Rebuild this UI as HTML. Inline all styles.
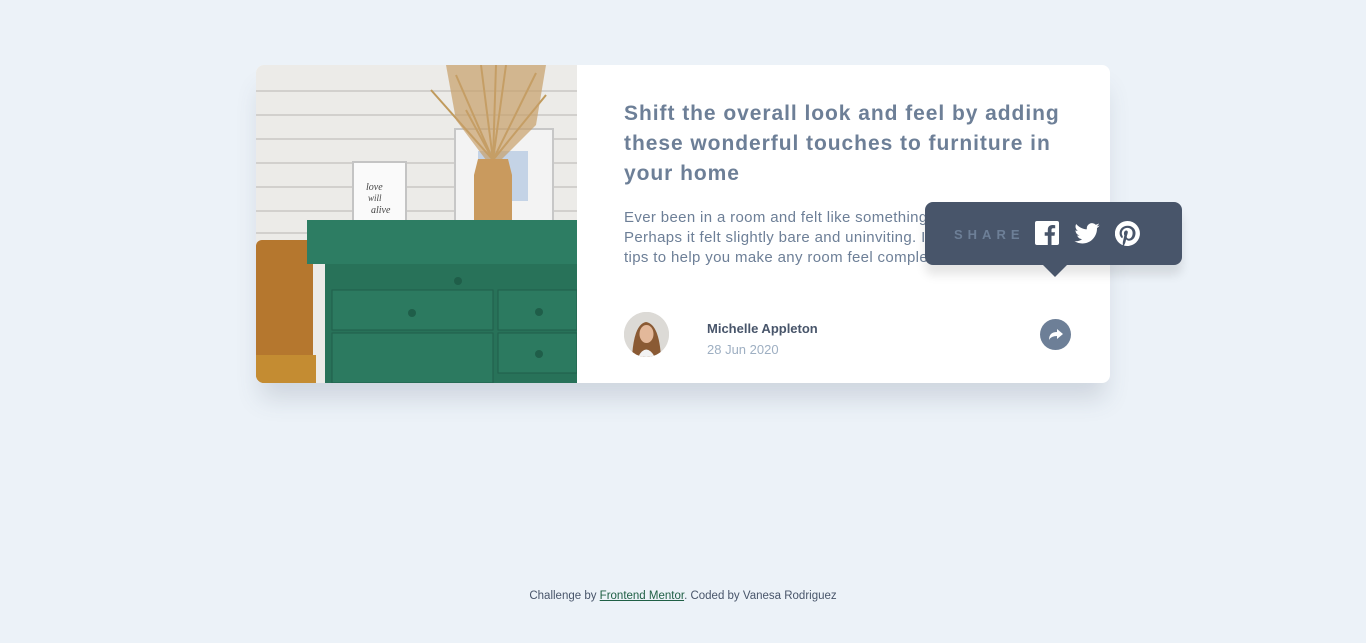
<!DOCTYPE html>
<html><head><meta charset="utf-8"><style>
*{margin:0;padding:0;box-sizing:border-box}
body{width:1366px;height:643px;background:#ecf2f8;font-family:"Liberation Sans",sans-serif;position:relative;overflow:hidden}
.card{position:absolute;left:256px;top:65px;width:854px;height:318px;background:#fff;border-radius:8px;overflow:visible;box-shadow:0 20px 25px -5px rgba(72,85,106,.18)}
.img{position:absolute;left:0;top:0;width:321px;height:318px;border-radius:8px 0 0 8px;overflow:hidden}
h1{position:absolute;left:368px;top:34px;font-size:21px;line-height:30px;color:#6d7f97;font-weight:bold;white-space:nowrap;letter-spacing:0.95px}
p.b{position:absolute;left:368px;top:143px;font-size:15px;line-height:20px;color:#6d7f97;white-space:nowrap;letter-spacing:0.35px}
.av{position:absolute;left:368px;top:247px;width:45px;height:45px;border-radius:50%;overflow:hidden;background:#d9d6d2}
.name{position:absolute;left:451px;top:256px;font-size:13px;font-weight:bold;color:#48556a}
.date{position:absolute;left:451px;top:277px;font-size:13px;color:#9eafc2}
.sh{position:absolute;left:784px;top:254px;width:31px;height:31px;border-radius:50%;background:#6d7f97}
.pop{position:absolute;left:925px;top:202px;width:257px;height:63px;background:#48556a;border-radius:8px;box-shadow:0 10px 10px rgba(0,0,0,.1)}
.pop:after{content:"";position:absolute;left:118px;top:63px;border:12px solid transparent;border-top:12px solid #48556a;border-bottom:0}
.pop span{position:absolute;left:29px;top:25px;font-size:13px;letter-spacing:5px;color:#6d7f97;font-weight:bold}
.foot{position:absolute;top:590px;left:0;width:1366px;text-align:center;font-size:11.5px;color:#48556a}
.foot a{color:#1f5f45;text-decoration:underline}
</style></head><body>
<div class="card">
<div class="img"><svg width="321" height="318" viewBox="0 0 321 318">
<rect width="321" height="318" fill="#ecebe8"/>
<g stroke="#c9c8c4" stroke-width="1.5">
<line x1="0" y1="26" x2="321" y2="26"/><line x1="0" y1="50" x2="321" y2="50"/><line x1="0" y1="74" x2="321" y2="74"/><line x1="0" y1="98" x2="321" y2="98"/><line x1="0" y1="122" x2="321" y2="122"/><line x1="0" y1="146" x2="321" y2="146"/><line x1="0" y1="168" x2="321" y2="168"/>
</g>
<rect x="0" y="175" width="57" height="143" fill="#b5772e" rx="6"/>
<rect x="0" y="290" width="60" height="28" fill="#c48c32"/>
<rect x="199" y="64" width="98" height="95" fill="#f3f3f3" stroke="#c7c7c7" stroke-width="2"/>
<rect x="222" y="86" width="50" height="50" fill="#c4d3e6"/>
<rect x="97" y="97" width="53" height="65" fill="#fafafa" stroke="#c4c4c4" stroke-width="2"/>
<text x="110" y="125" font-size="10" fill="#444" font-family="Liberation Serif" font-style="italic">love</text>
<text x="112" y="136" font-size="9" fill="#444" font-family="Liberation Serif" font-style="italic">will</text>
<text x="115" y="148" font-size="10" fill="#444" font-family="Liberation Serif" font-style="italic">alive</text>
<g stroke="#c09a5c" stroke-width="2">
<line x1="237" y1="95" x2="200" y2="10"/><line x1="237" y1="95" x2="225" y2="0"/><line x1="237" y1="95" x2="250" y2="0"/><line x1="237" y1="95" x2="280" y2="8"/><line x1="237" y1="95" x2="175" y2="25"/><line x1="237" y1="95" x2="290" y2="30"/><line x1="237" y1="95" x2="240" y2="0"/><line x1="237" y1="95" x2="210" y2="45"/>
</g>
<path d="M190 0 L290 0 L280 60 L245 95 L230 95 L200 55 Z" fill="#c8a06a" opacity=".7"/>
<path d="M222 94 L252 94 L256 110 L256 176 Q237 180 218 176 L218 110 Z" fill="#c99a5e"/>
<rect x="51" y="155" width="270" height="44" fill="#2d7d63"/>
<rect x="69" y="199" width="252" height="119" fill="#287259"/>
<rect x="76" y="225" width="161" height="40" fill="#2c7a60" stroke="#215f4a"/>
<rect x="242" y="225" width="79" height="40" fill="#2c7a60" stroke="#215f4a"/>
<rect x="76" y="268" width="161" height="50" fill="#2c7a60" stroke="#215f4a"/>
<rect x="242" y="268" width="79" height="40" fill="#2c7a60" stroke="#215f4a"/>
<circle cx="156" cy="248" r="4" fill="#1f5e49"/><circle cx="283" cy="247" r="4" fill="#1f5e49"/><circle cx="283" cy="289" r="4" fill="#1f5e49"/><circle cx="202" cy="216" r="4" fill="#1f5e49"/>
</svg></div>
<h1>Shift the overall look and feel by adding<br>these wonderful touches to furniture in<br>your home</h1>
<p class="b">Ever been in a room and felt like something was missing?<br>Perhaps it felt slightly bare and uninviting. I’ve got some simple<br>tips to help you make any room feel complete.</p>
<div class="av"><svg width="45" height="45"><rect width="45" height="45" fill="#dcdad6"/><path d="M8 45 Q10 12 22 10 Q35 12 37 45Z" fill="#8a5a34"/><ellipse cx="22.5" cy="22" rx="7" ry="9" fill="#e3b89a"/><path d="M14 45 Q22 30 31 45Z" fill="#f2f2f2"/></svg></div>
<div class="name">Michelle Appleton</div>
<div class="date">28 Jun 2020</div>
<div class="sh"><svg width="31" height="31" viewBox="0 0 31 31"><path d="M17 10 L23 15 L17 20 L17 17 Q11 17 9 21 Q9 13 17 13Z" fill="#fff"/></svg></div>
</div>
<div class="pop"><span>SHARE</span>
<svg style="position:absolute;left:110px;top:19px" width="24" height="24" viewBox="0 0 24 24"><rect width="24" height="24" rx="2" fill="#fff"/><path d="M16.5 24V14.8h3l.5-3.5h-3.5V9c0-1 .3-1.7 1.8-1.7h1.9V4.2c-.3 0-1.5-.2-2.8-.2-2.8 0-4.6 1.7-4.6 4.8v2.5H9.7v3.5h3.1V24z" fill="#48556a"/></svg>
<svg style="position:absolute;left:149px;top:21px" width="26" height="21" viewBox="0 0 24 20"><path d="M24 2.4c-.9.4-1.8.6-2.8.8 1-.6 1.8-1.6 2.2-2.7-1 .6-2 1-3.1 1.2A4.9 4.9 0 0 0 11.9 6C7.8 5.8 4.2 3.9 1.7.9c-1.3 2.3-.6 5.1 1.5 6.6-.8 0-1.6-.2-2.2-.6 0 2.4 1.7 4.4 3.9 4.9-.7.2-1.5.2-2.2.1.6 2 2.4 3.4 4.6 3.4A9.9 9.9 0 0 1 0 17.3 14 14 0 0 0 7.5 19.5c9.1 0 14.3-7.7 14-14.6 1-.7 1.8-1.6 2.5-2.5z" fill="#fff"/></svg>
<svg style="position:absolute;left:190px;top:19px" width="25" height="25" viewBox="0 0 24 24"><path d="M12 0a12 12 0 0 0-4.4 23.2c-.1-.9-.2-2.4 0-3.4l1.4-6s-.4-.7-.4-1.8c0-1.7 1-2.9 2.2-2.9 1 0 1.5.8 1.5 1.7 0 1-.7 2.6-1 4-.3 1.2.6 2.2 1.8 2.2 2.1 0 3.8-2.2 3.8-5.5 0-2.9-2.1-4.9-5-4.9-3.4 0-5.4 2.6-5.4 5.2 0 1 .4 2.1.9 2.7.1.1.1.2.1.3l-.3 1.4c-.1.2-.2.3-.4.2-1.5-.7-2.4-2.9-2.4-4.6 0-3.8 2.7-7.2 7.9-7.2 4.1 0 7.4 3 7.4 6.9 0 4.1-2.6 7.4-6.2 7.4-1.2 0-2.4-.6-2.8-1.4l-.7 2.9c-.3 1-1 2.3-1.5 3.1A12 12 0 1 0 12 0z" fill="#fff"/></svg>
</div>
<div class="foot">Challenge by <a>Frontend Mentor</a>. Coded by Vanesa Rodriguez</div>
</body></html>
